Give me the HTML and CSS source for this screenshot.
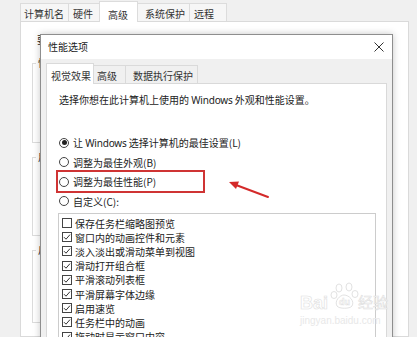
FILE: index.html
```html
<!doctype html>
<html lang="zh-CN">
  <head>
    <meta charset="UTF-8" />
    <meta name="viewport" content="width=device-width, initial-scale=1.0" />
    <title>性能选项</title>
    <link rel="stylesheet" href="styles.css">
  </head>
  <body>
    <div class="sys">
      <div class="sys-tabs">
        <span class="sys-tab t-name">计算机名</span>
        <span class="sys-tab t-hw">硬件</span>
        <span class="sys-tab sys-tab-active">高级</span>
        <span class="sys-tab t-prot">系统保护</span>
        <span class="sys-tab t-remote">远程</span>
      </div>
      <div class="sys-panel">
        <p class="sys-note">要进行大多数更改，你必须作为管理员登录。</p>
        <div class="group g1"><span class="group-title">性能</span></div>
        <div class="group g2"><span class="group-title">用户配置文件</span></div>
        <div class="group g3"><span class="group-title">启动和故障恢复</span></div>
      </div>
    </div>

    <div class="dialog">
      <div class="dlg-title">
        <span>性能选项</span>
        <svg class="close" width="10" height="10" viewBox="0 0 10 10">
          <path d="M0.5 0.5 L9.5 9.5 M9.5 0.5 L0.5 9.5" stroke="#333" stroke-width="1" fill="none" />
        </svg>
      </div>
      <div class="dlg-tabs">
        <span class="dlg-tab dlg-tab-active">视觉效果</span>
        <span class="dlg-tab t-adv">高级</span>
        <span class="dlg-tab t-dep">数据执行保护</span>
      </div>
      <div class="dlg-panel">
        <p class="desc">选择你想在此计算机上使用的 <span class="latin">Windows</span> 外观和性能设置。</p>
        <div class="options">
          <div class="radio"><span class="dot on"></span><span>让 <span class="latin">Windows</span> 选择计算机的最佳设置(L)</span></div>
          <div class="radio"><span class="dot"></span><span>调整为最佳外观(B)</span></div>
          <div class="radio"><span class="dot"></span><span>调整为最佳性能(P)</span><span class="mark"></span></div>
          <div class="radio"><span class="dot"></span><span>自定义(C):</span></div>
        </div>
        <div class="list">
          <div class="item"><span class="box"></span>保存任务栏缩略图预览</div>
          <div class="item"><span class="box checked"></span>窗口内的动画控件和元素</div>
          <div class="item"><span class="box checked"></span>淡入淡出或滑动菜单到视图</div>
          <div class="item"><span class="box checked"></span>滑动打开组合框</div>
          <div class="item"><span class="box checked"></span>平滑滚动列表框</div>
          <div class="item"><span class="box checked"></span>平滑屏幕字体边缘</div>
          <div class="item"><span class="box checked"></span>启用速览</div>
          <div class="item"><span class="box checked"></span>任务栏中的动画</div>
          <div class="item"><span class="box checked"></span>拖动时显示窗口内容</div>
        </div>
      </div>
    </div>

    <svg class="arrow" width="417" height="337" viewBox="0 0 417 337">
      <line x1="268" y1="197" x2="236" y2="185" stroke="#d42a2a" stroke-width="2" stroke-linecap="round" />
      <polygon points="229,182 239,181.5 236,189" fill="#d42a2a" />
    </svg>

    <div class="watermark">
      <span class="wm-bai">Bai</span>
      <svg class="wm-paw" width="30" height="28" viewBox="0 0 30 28">
        <g fill="none" stroke="#e2e2e2" stroke-width="1">
          <ellipse cx="9" cy="6" rx="3" ry="4" />
          <ellipse cx="19" cy="5" rx="3" ry="4" />
          <ellipse cx="4" cy="13" rx="3" ry="3.5" />
          <ellipse cx="25" cy="12" rx="3" ry="3.5" />
          <path d="M7 24 C4 19 10 13 14 13 C19 13 25 19 22 24 C20 27 9 27 7 24 Z" />
        </g>
        <text x="14.5" y="23" text-anchor="middle" class="wm-du">du</text>
      </svg>
      <span class="wm-jy">经验</span>
      <span class="wm-url">jingyan.baidu.com</span>
    </div>
  </body>
</html>
```

FILE: styles.css
```css
body {
  margin: 0;
  width: 417px;
  height: 337px;
  overflow: hidden;
  position: relative;
  background-color: #f0f0f0;
  font-family: "Noto Sans CJK SC", "Noto Sans", sans-serif;
  font-size: 10px;
  color: #222;
}
.latin {
  font-family: "Noto Sans", sans-serif;
  letter-spacing: -0.2px;
}

/* system properties window behind */
.sys {
  padding: 0 8px 0 20px;
}
.sys-tabs {
  display: flex;
  align-items: flex-end;
  height: 21px;
}
.sys-tab {
  box-sizing: border-box;
  height: 18px;
  line-height: 14px;
  padding: 3px 4px 0;
  border: 1px solid #dcdcdc;
  border-bottom: none;
  margin-right: -1px;
  background-color: #f6f6f6;
  color: #333;
}
.t-name {
  padding-left: 3px;
}
.t-hw {
  padding-right: 6px;
}
.sys-tab-active {
  height: 21px;
  padding: 6px 9px 0 8px;
  background-color: #fff;
  position: relative;
  z-index: 1;
  margin-bottom: -1px;
}
.t-prot {
  padding-left: 7px;
}
.t-remote {
  padding-right: 12px;
}
.sys-panel {
  height: 316px;
  box-sizing: border-box;
  background-color: #fff;
  border: 1px solid #dadada;
  padding: 11px 0 0 11px;
}
.sys-note {
  margin: 0;
  line-height: 14px;
  padding-left: 5px;
}
.group {
  box-sizing: border-box;
  width: 358px;
  border: 1px solid #dcdcdc;
}
.group-title {
  display: block;
  width: fit-content;
  margin: -8px 0 0 3px;
  padding: 0 2px;
  line-height: 14px;
  background-color: #fff;
}
.g1 {
  margin-top: 16px;
  height: 80px;
}
.g2 {
  margin-top: 14px;
  height: 79px;
}
.g3 {
  margin-top: 14px;
  height: 73px;
}

/* performance options dialog */
.dialog {
  position: absolute;
  left: 40px;
  top: 34px;
  width: 353px;
  height: 320px;
  box-sizing: border-box;
  border: 1px solid #8e8e8e;
  background-color: #f0f0f0;
  box-shadow: 0 0 7px rgba(0, 0, 0, 0.22);
}
.dlg-title {
  height: 24px;
  display: flex;
  align-items: center;
  justify-content: space-between;
  padding: 0 8px 0 7px;
  background-color: #fff;
  line-height: 14px;
}
.dlg-tabs {
  display: flex;
  align-items: flex-end;
  height: 20px;
  margin-top: 4px;
  padding-left: 5px;
}
.dlg-tab {
  box-sizing: border-box;
  height: 18px;
  line-height: 14px;
  padding: 3px 4px 0;
  border: 1px solid #dadada;
  border-bottom: none;
  margin-right: -1px;
  color: #333;
}
.dlg-tab-active {
  height: 21px;
  padding: 5px 2px 0 4px;
  background-color: #fff;
  position: relative;
  z-index: 1;
  margin-bottom: -1px;
}
.t-adv {
  padding: 3px 8px 0 3px;
}
.t-dep {
  padding-left: 7px;
}
.dlg-panel {
  margin: 0 5px;
  height: 260px;
  box-sizing: border-box;
  background-color: #fff;
  border: 1px solid #d9d9d9;
  padding: 9px 0 0 12px;
}
.desc {
  margin: 0;
  line-height: 14px;
}
.options {
  margin-top: 26px;
}
.radio {
  position: relative;
  display: flex;
  align-items: center;
  gap: 4px;
  height: 19.5px;
}
.dot {
  box-sizing: border-box;
  width: 10px;
  height: 10px;
  border: 1px solid #444;
  border-radius: 50%;
  display: flex;
  align-items: center;
  justify-content: center;
}
.dot.on::after {
  content: "";
  width: 5px;
  height: 5px;
  border-radius: 50%;
  background-color: #222;
}
.mark {
  position: absolute;
  left: -3px;
  top: -2px;
  width: 149px;
  height: 23px;
  box-sizing: border-box;
  border: 2px solid #cf3434;
}
.list {
  margin: 2px 0 0 -1px;
  width: 318px;
  height: 140px;
  box-sizing: border-box;
  border: 1px solid #cccccc;
  padding: 2px 0 0 3px;
}
.item {
  display: flex;
  align-items: center;
  gap: 3px;
  height: 14.2px;
}
.box {
  box-sizing: border-box;
  width: 10px;
  height: 10px;
  border: 1px solid #444;
  background-color: #fff;
}
.box.checked {
  background: #fff url("data:image/svg+xml,%3Csvg xmlns='http://www.w3.org/2000/svg' width='8' height='8' viewBox='0 0 8 8'%3E%3Cpath d='M1 4.2 L3 6.2 L7 1.6' fill='none' stroke='%23333' stroke-width='1'/%3E%3C/svg%3E") center / 8px 8px no-repeat;
}

/* annotation arrow */
.arrow {
  position: absolute;
  left: 0;
  top: 0;
  pointer-events: none;
}

/* watermark */
.watermark {
  position: absolute;
  left: 298px;
  top: 282px;
  width: 100px;
  height: 50px;
  color: #fff;
  pointer-events: none;
}
.wm-bai {
  position: absolute;
  left: 2px;
  top: 11px;
  font-family: "Liberation Sans", sans-serif;
  font-size: 18px;
  font-weight: bold;
  -webkit-text-stroke: 0.6px #e0e0e0;
}
.wm-paw {
  position: absolute;
  left: 32px;
  top: 0;
}
.wm-du {
  font-family: "Liberation Sans", sans-serif;
  font-size: 9px;
  font-weight: bold;
  fill: #fff;
  stroke: #e0e0e0;
  stroke-width: 0.5;
}
.wm-jy {
  position: absolute;
  left: 60px;
  top: 10px;
  font-size: 15px;
  line-height: 20px;
  -webkit-text-stroke: 0.6px #e0e0e0;
}
.wm-url {
  position: absolute;
  left: 2px;
  top: 33px;
  font-family: "Liberation Sans", sans-serif;
  font-size: 10px;
  color: #e8e8e8;
}
```
